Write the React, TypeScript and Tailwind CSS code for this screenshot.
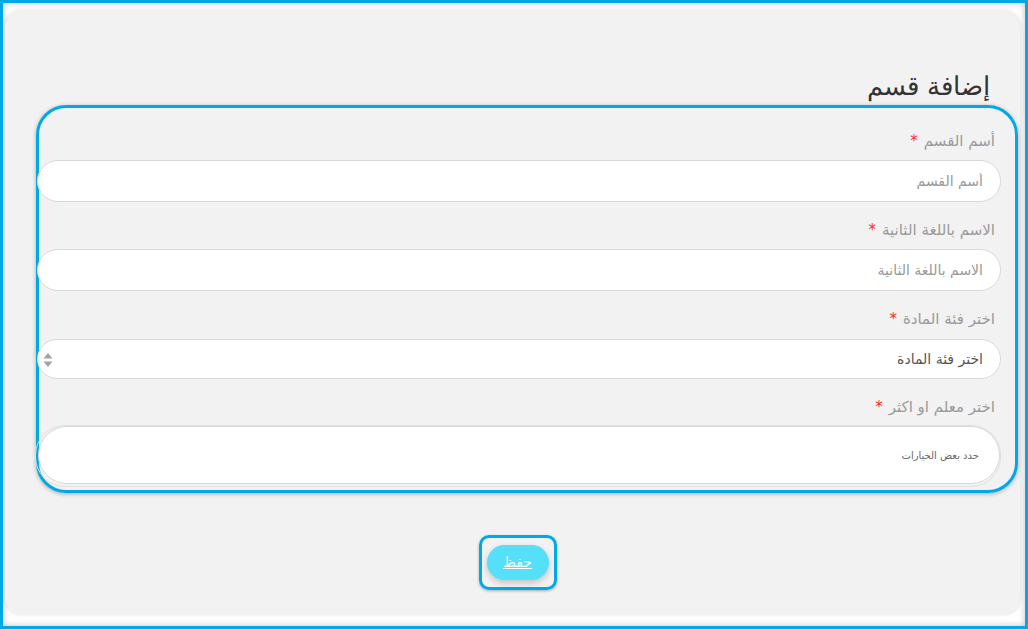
import { useState } from "react";

const font = { fontFamily: '"DejaVu Sans", "Noto Sans", sans-serif' };

function Label({ text }: { text: string }) {
  return (
    <div className="flex h-5 items-center justify-start pr-[6px] text-[15px] leading-5 text-[#9a9a9a]">
      <span>{text}</span>
      <span className="mr-[6px] text-[#ff2a2a]">*</span>
    </div>
  );
}

export default function App() {
  const [name, setName] = useState("");
  const [name2, setName2] = useState("");

  return (
    <div
      dir="rtl"
      style={font}
      className="h-[629px] w-[1028px] overflow-hidden border-[3px] border-[#00a8e6] bg-white pt-[8px] pr-[5px] pb-[12px] pl-[2px] shadow-[inset_0_0_6px_rgba(0,0,0,0.25)]"
    >
      <div className="flex h-full w-full flex-col rounded-[16px] bg-[#f2f2f2] pr-[2px] pl-[31px] shadow-[0_0_4px_rgba(0,0,0,0.15)]">
        <h1 className="mt-[57px] mr-[28px] h-[36px] text-[26px] leading-[36px] font-light text-[#333]">
          إضافة قسم
        </h1>

        <div className="mt-[1px] h-[388px] rounded-[30px] border-[3px] border-[#00a8e6] pt-[23px] pr-[14px] shadow-[0_1px_4px_rgba(0,0,0,0.3)]">
          <div className="flex flex-col gap-[18px]">
            <div className="flex flex-col gap-[9px]">
              <Label text="أسم القسم" />
              <input
                value={name}
                onChange={(e) => setName(e.target.value)}
                placeholder="أسم القسم"
                className="-ml-[2px] h-[42px] rounded-full border border-[#d9d9d9] bg-white pr-[17px] text-[14px] text-[#555] outline-none placeholder:text-[#999]"
              />
            </div>

            <div className="flex flex-col gap-[9px]">
              <Label text="الاسم باللغة الثانية" />
              <input
                value={name2}
                onChange={(e) => setName2(e.target.value)}
                placeholder="الاسم باللغة الثانية"
                className="-ml-[2px] h-[42px] rounded-full border border-[#d9d9d9] bg-white pr-[17px] text-[14px] text-[#555] outline-none placeholder:text-[#999]"
              />
            </div>

            <div className="flex flex-col gap-[10px]">
              <Label text="اختر فئة المادة" />
              <div className="relative -ml-[2px] flex h-[40px] items-center rounded-full border border-[#d9d9d9] bg-white pr-[17px] text-[14px] text-[#555]">
                <span>اختر فئة المادة</span>
                <svg
                  className="absolute top-[12px] left-[5px]"
                  width="10"
                  height="16"
                  viewBox="0 0 10 16"
                >
                  <path d="M5 1 L9.5 6.5 L0.5 6.5 Z" fill="#a3a3a3" />
                  <path d="M5 15 L9.5 9.5 L0.5 9.5 Z" fill="#a3a3a3" />
                </svg>
              </div>
            </div>

            <div className="flex flex-col gap-[8px]">
              <Label text="اختر معلم او اكثر" />
              <div className="-ml-[4px] rounded-[30px] border border-[#e0e0e0] pb-[2px] pl-[2px]">
                <div className="flex h-[58px] items-center rounded-[30px] border border-[#d9d9d9] bg-white pr-[20px] text-[10px] text-[#666]">
                  حدد بعض الخيارات
                </div>
              </div>
            </div>
          </div>
        </div>

        <div className="mt-[42px] flex justify-center pr-[19px]">
          <div className="rounded-[10px] border-[3px] border-[#00a8e6] px-[5px] py-[7px] shadow-[0_1px_3px_rgba(0,0,0,0.3)]">
            <button className="h-[35px] w-[62px] rounded-full bg-[#55dff9] text-[14px] text-white underline shadow-[0_3px_6px_rgba(0,0,0,0.2)]">
              حفظ
            </button>
          </div>
        </div>
      </div>
    </div>
  );
}
